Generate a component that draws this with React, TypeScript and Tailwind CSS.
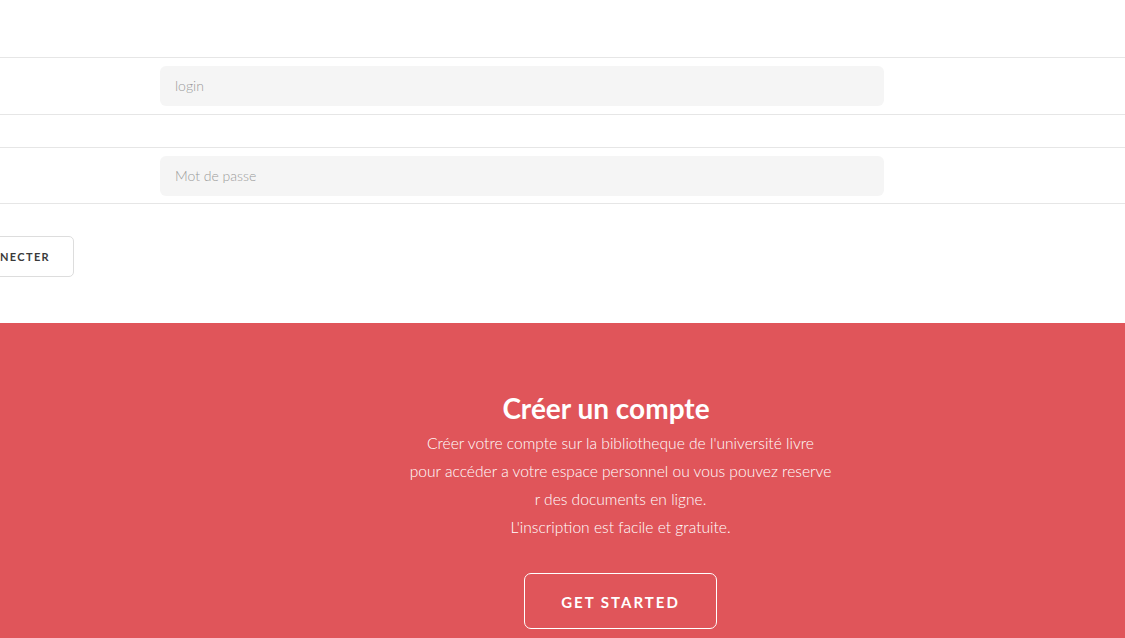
import React from "react";

export default function App() {
  const font = { fontFamily: "Lato, 'Open Sans', sans-serif" };
  return (
    <div className="w-[1125px] h-[638px] overflow-hidden bg-white" style={font}>
      <div className="h-[57px]" />
      <div className="border-t border-b border-[#e6e6e6] py-[8px] pl-[160px]">
        <div className="w-[724px] h-[40px] rounded-[6px] bg-[#f5f5f5] flex items-center pl-[15px] pb-[1px] text-[14px] font-light text-[#9a9a9a]">
          login
        </div>
      </div>
      <div className="h-[32px]" />
      <div className="border-t border-b border-[#e6e6e6] pt-[8px] pb-[7px] pl-[160px]">
        <div className="w-[724px] h-[40px] rounded-[6px] bg-[#f5f5f5] flex items-center pl-[15px] pb-[1px] text-[14px] font-light text-[#9a9a9a]">
          Mot de passe
        </div>
      </div>
      <div className="h-[32px]" />
      <div className="w-[74px] flex justify-end">
        <button className="shrink-0 whitespace-nowrap h-[41px] pt-[1px] px-[23px] border border-[#dddddd] rounded-[5px] bg-white text-[11px] font-bold tracking-[1.35px] text-[#3a3a3a]">
          SE CONNECTER
        </button>
      </div>
      <div className="h-[46px]" />
      <div className="bg-[#e0555a] h-[400px] flex flex-col items-center pt-[67px] pl-[116px] text-white">
        <h2 className="text-[28px] font-bold leading-[36px] pr-[29px]">Créer un compte</h2>
        <p className="mt-[3px] text-[15.6px] font-light leading-[28px] text-center text-white">
          Créer votre compte sur la bibliotheque de l'université livre
          <br />
          pour accéder a votre espace personnel ou vous pouvez reserve
          <br />
          r des documents en ligne.
          <br />
          L'inscription est facile et gratuite.
        </p>
        <button className="mt-[32px] w-[193px] h-[56px] border border-white rounded-[7px] pt-[2px] text-[15px] font-bold tracking-[2px] text-white">
          GET STARTED
        </button>
      </div>
    </div>
  );
}
